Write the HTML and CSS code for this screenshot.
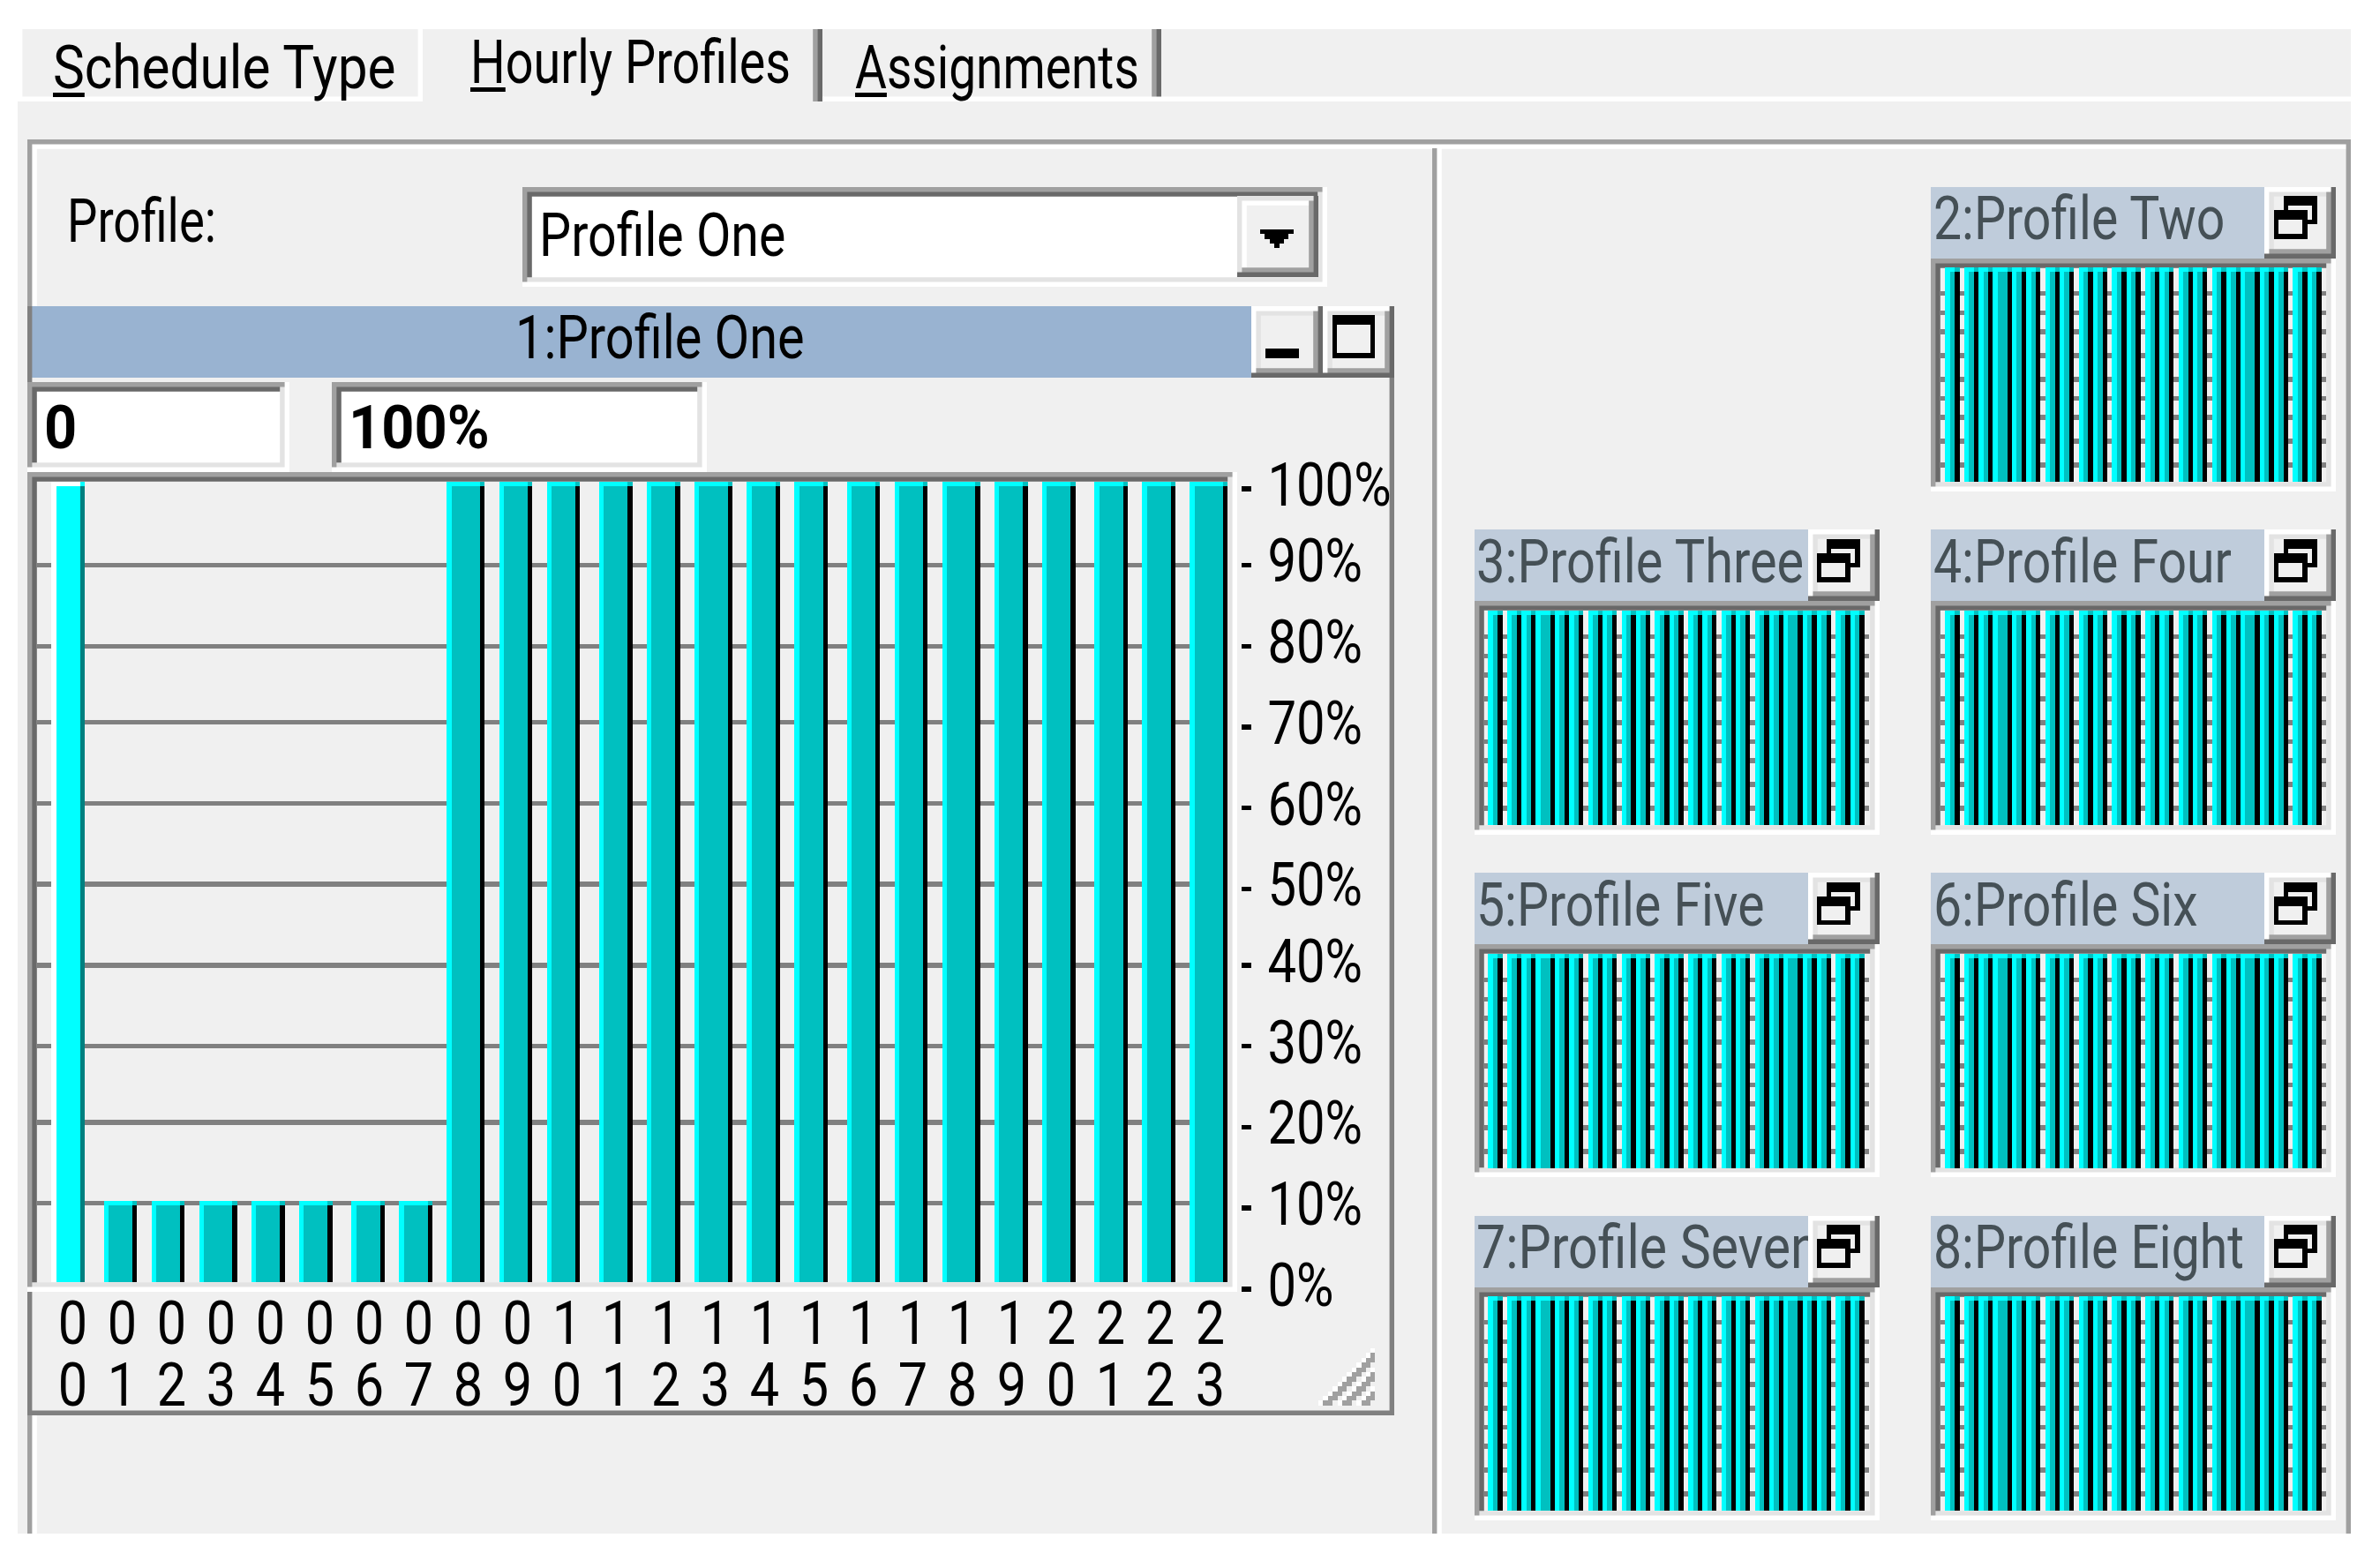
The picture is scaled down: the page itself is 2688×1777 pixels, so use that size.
FILE: index.html
```
<!DOCTYPE html>
<html lang="en">
  <head>
    <meta charset="UTF-8" />
    <meta name="viewport" content="width=device-width, initial-scale=1.0" />
    <title>Hourly Profiles</title>
    <link rel="stylesheet" href="styles.css">
  </head>
  <body>
    <div class="dialog">
      <div class="tabs">
        <div class="tab tab-first"><span class="text"><u>S</u>chedule Type</span></div>
        <div class="tab tab-active"><span class="text"><u>H</u>ourly Profiles</span></div>
        <div class="tab tab-last"><span class="text"><u>A</u>ssignments</span></div>
        <div class="tab-rest"></div>
      </div>

      <div class="frame">
        <div class="left-pane">
          <div class="profile-row">
            <label class="profile-label"><span class="text">Profile:</span></label>
            <div class="combo sunken">
              <span class="text">Profile One</span>
              <div class="combo-button">
                <svg class="arrow" viewBox="0 0 7 4"><path d="M0 0h7v1h-1v1h-1v1h-1v1h-1v-1h-1v-1h-1v-1h-1z" /></svg>
              </div>
            </div>
          </div>

          <div class="window">
            <div class="title-bar">
              <div class="title"><span class="text">1:Profile One</span></div>
              <div class="button"><svg class="icon" viewBox="0 0 9 9"><path d="M1 7h7v2h-7z" /></svg></div>
              <div class="button"><svg class="icon" viewBox="0 0 9 9"><path fill-rule="evenodd" d="M0 0h9v9h-9zM1 2v6h7v-6z" /></svg></div>
            </div>
            <div class="edits">
              <div class="edit edit-hour sunken"><span class="text">0</span></div>
              <div class="edit edit-value sunken"><span class="text">100%</span></div>
            </div>
            <div class="chart-row">
              <div class="chart sunken"><svg id="main-chart" viewBox="0 0 250 168" preserveAspectRatio="none"></svg></div>
              <div class="axis">
                <span>100%</span>
                <span>90%</span>
                <span>80%</span>
                <span>70%</span>
                <span>60%</span>
                <span>50%</span>
                <span>40%</span>
                <span>30%</span>
                <span>20%</span>
                <span>10%</span>
                <span>0%</span>
              </div>
            </div>
            <div class="hours" id="hours"></div>
            <svg class="grip" id="grip" viewBox="0 0 12 12"></svg>
          </div>
        </div>

        <div class="right-pane" id="profiles"></div>
      </div>
    </div>

    <script>
      const SVG = "http://www.w3.org/2000/svg";

      function rect(svg, x, y, w, h, fill) {
        const r = document.createElementNS(SVG, "rect");
        r.setAttribute("x", x);
        r.setAttribute("y", y);
        r.setAttribute("width", w);
        r.setAttribute("height", h);
        r.setAttribute("fill", fill);
        svg.appendChild(r);
      }

      function bar(svg, start, end, top, bottom, colors) {
        rect(svg, start, top, end - start, bottom - top, colors.light);
        rect(svg, start + 1, top + 1, end - start - 2, bottom - top - 1, colors.face);
        rect(svg, end - 1, top, 1, 1, colors.face);
        rect(svg, end - 1, top + 1, 1, bottom - top - 1, colors.dark);
      }

      const normal = { light: "#00ffff", face: "#00c0c0", dark: "#000000" };
      const selected = { light: "#ffffff", face: "#00ffff", dark: "#008080" };

      // main chart, one bar per hour
      const starts = [3, 14, 24, 34, 45, 55, 66, 76, 86, 97, 107, 118, 128, 138, 149, 159, 170, 180, 190, 201, 211, 222, 232, 242];
      const ends = [10, 21, 31, 42, 52, 62, 73, 83, 94, 104, 114, 125, 135, 146, 156, 166, 177, 187, 198, 208, 218, 229, 239, 250];
      const main = document.getElementById("main-chart");
      [17, 34, 50, 67, 84, 101, 118, 134, 151].forEach((y) => rect(main, 0, y, 250, 1, "#808080"));
      starts.forEach((s, i) => {
        const top = i > 0 && i < 8 ? 151 : 0;
        bar(main, s, ends[i], top, 168, i === 0 ? selected : normal);
      });

      const hours = document.getElementById("hours");
      for (let i = 0; i < 24; i++) {
        const [tens, ones] = String(i).padStart(2, "0");
        const hour = document.createElement("div");
        hour.innerHTML = `<span>${tens}</span><span>${ones}</span>`;
        hours.appendChild(hour);
      }

      const grip = document.getElementById("grip");
      for (let x = 0; x < 12; x++) {
        for (let y = 0; y < 12; y++) {
          const d = x + y - 11;
          if (d < 0 || d > 10 || d % 4 === 3) continue;
          rect(grip, x, y, 1, 1, d % 4 === 0 ? "#ffffff" : "#a0a0a0");
        }
      }

      // minimized profiles
      const names = ["2:Profile Two", "3:Profile Three", "4:Profile Four", "5:Profile Five", "6:Profile Six", "7:Profile Seven", "8:Profile Eight"];
      const miniStarts = [1, 5, 8, 11, 15, 18, 22, 25, 29, 32, 36, 39, 43, 46, 50, 53, 57, 60, 63, 67, 70, 74, 77];
      const profiles = document.getElementById("profiles");
      names.forEach((name) => {
        const mini = document.createElement("div");
        mini.className = "mini";
        mini.innerHTML = `
          <div class="title-bar">
            <div class="title"><span class="text">${name}</span></div>
            <div class="button"><svg class="icon" viewBox="0 0 9 9"><path fill-rule="evenodd" d="M2 0h7v6h-2v3h-7v-6h2zM3 2v1h4v2h1v-3zM1 5v3h5v-3z" /></svg></div>
          </div>
          <div class="mini-chart sunken"><svg viewBox="0 0 81 45" preserveAspectRatio="none"></svg></div>`;
        profiles.appendChild(mini);
        const svg = mini.querySelector(".mini-chart svg");
        [5, 9, 13, 18, 23, 27, 31, 36, 41].forEach((y) => rect(svg, 0, y, 81, 1, "#808080"));
        miniStarts.forEach((s) => bar(svg, s, s + (s === 11 || s === 63 ? 4 : 3), 0, 45, normal));
      });
    </script>
  </body>
</html>
```
FILE: styles.css
```
/* 1rem is one pixel of the enlarged dialog */
html {
  font-size: 5.398px;
}

* {
  box-sizing: border-box;
}

body {
  margin: 0;
  background: #fff;
  color: #000;
  font-family: Roboto, "Liberation Sans", sans-serif;
  overflow: hidden;
}

svg {
  display: block;
  shape-rendering: crispEdges;
}

.dialog {
  width: 489.8rem;
  height: 1705px;
  margin: 33px 0 0 20px;
  background: #f0f0f0;
  font-size: 69px;
  line-height: 13rem;
  overflow: hidden;
}

.text {
  display: inline-block;
  white-space: nowrap;
  transform: scaleX(0.83);
  transform-origin: left;
}

u {
  text-decoration: underline;
  text-decoration-thickness: 5px;
  text-underline-offset: 5px;
}

.sunken {
  box-shadow: inset -1rem -1rem #fff, inset 1rem 1rem #a0a0a0,
    inset -2rem -2rem #e3e3e3, inset 2rem 2rem #696969;
}

/* tabs */
.tabs {
  display: flex;
  height: 15.1rem;
}

.tab {
  padding-top: 1.6rem;
}

.tab-first {
  width: 85rem;
  padding-left: 7.5rem;
  box-shadow: inset -1rem -1rem #fff, inset 1rem 0 #fff;
}

.tab-first .text {
  transform: scaleX(0.874);
}

.tab-active {
  width: 84rem;
  padding: 0.6rem 0 0 10rem;
  box-shadow: inset -1rem 0 #696969, inset -2rem 0 #a0a0a0;
}

.tab-active .text {
  transform: scaleX(0.808);
}

.tab-last {
  width: 71rem;
  padding-left: 6.8rem;
  box-shadow: inset 0 -1rem #fff, inset -1rem 0 #696969, inset -2rem 0 #a0a0a0;
}

.tab-last .text {
  transform: scaleX(0.798);
}

.tab-rest {
  flex: 1;
  box-shadow: inset 0 -1rem #fff;
}

/* group frame */
.frame {
  display: flex;
  height: 293rem;
  margin: 8rem 0 0 2rem;
  box-shadow: inset -1rem 0 #a0a0a0, inset 1rem 1rem #a0a0a0, inset 2rem 2rem #fff;
}

.left-pane {
  width: 295rem;
  padding-top: 10rem;
}

.profile-row {
  display: flex;
  height: 21rem;
}

.profile-label {
  width: 104rem;
  padding: 0.8rem 0 0 8.4rem;
}

.profile-label .text {
  transform: scaleX(0.79);
}

.combo {
  display: flex;
  justify-content: space-between;
  width: 169rem;
  padding: 2rem;
  background: #fff;
}

.combo > .text {
  margin: 1.7rem 0 0 1.4rem;
}

.combo-button {
  width: 17rem;
  height: 17rem;
  padding: 6.9rem 0 0 4.9rem;
  background: #f0f0f0;
  box-shadow: inset -1rem -1rem #696969, inset 1rem 1rem #e3e3e3,
    inset -2rem -2rem #a0a0a0, inset 2rem 2rem #fff;
}

.arrow {
  width: 7rem;
  height: 4rem;
}

/* main window */
.window {
  position: relative;
  width: 287rem;
  height: 233rem;
  margin-top: 4rem;
  background: #f0f0f0;
  box-shadow: inset -1rem -1rem #808080, inset 1rem 0 #808080;
}

.title-bar {
  display: flex;
  height: 15rem;
}

.title {
  flex: 1;
  min-width: 0;
  padding-top: 0.3rem;
  background: #99b3d1;
  overflow: hidden;
}

.window .title {
  padding-left: 102.5rem;
  box-shadow: inset 1rem 0 #808080;
}

.window .title .text {
  transform: scaleX(0.836);
}

.button {
  width: 15rem;
  height: 15rem;
  padding: 2rem;
  background: #f0f0f0;
  box-shadow: inset -1rem -1rem #696969, inset 1rem 1rem #fff,
    inset -2rem -2rem #a0a0a0, inset 2rem 2rem #e3e3e3;
}

.icon {
  width: 9rem;
  height: 9rem;
}

.edits {
  display: flex;
  gap: 9rem;
  margin-top: 1rem;
}

.edit {
  height: 19rem;
  padding: 3.1rem 0 0 3.5rem;
  background: #fff;
  font-weight: bold;
}

.edit .text {
  transform: scaleX(0.94);
}

.edit-hour {
  width: 55rem;
}

.edit-value {
  width: 78.7rem;
}

.chart-row {
  display: flex;
  height: 172rem;
}

.chart {
  width: 254rem;
  padding: 2rem;
  background: #f0f0f0;
}

.chart svg {
  width: 250rem;
  height: 168rem;
}

.axis {
  display: grid;
  grid-template-rows: 16rem 17rem 17rem 17rem 17rem 16rem 17rem 17rem 17rem 17rem 17rem;
  margin: -3.8rem 0 0 0.9rem;
}

.axis span {
  white-space: nowrap;
  transform: scaleX(0.84);
  transform-origin: left;
}

.axis span::before {
  content: "";
  display: inline-block;
  width: 2.5rem;
  height: 1rem;
  margin-right: 4rem;
  vertical-align: 3rem;
  background: #000;
}

.hours {
  display: flex;
  padding: 0.2rem 0 0 4.4rem;
}

.hours div {
  display: flex;
  flex-direction: column;
  align-items: center;
  width: 10.38rem;
}

.hours span {
  transform: scaleX(0.86);
}

.grip {
  position: absolute;
  right: 4rem;
  bottom: 2.1rem;
  width: 12rem;
  height: 12rem;
}

/* minimized profiles */
.right-pane {
  display: grid;
  flex: 1;
  grid-template-columns: 85rem 85rem;
  grid-auto-rows: 64rem;
  column-gap: 10.9rem;
  row-gap: 8rem;
  margin-top: 2rem;
  padding: 8rem 0 0 8.8rem;
  box-shadow: inset 1rem 0 #a0a0a0, inset 2rem 0 #fff;
}

.mini:first-child {
  grid-column: 2;
}

.mini .title {
  padding-left: 0.5rem;
  background: #bfccdb;
  color: #455056;
}

.mini .text {
  transform: scaleX(0.828);
}

.mini:nth-child(2) .text {
  transform: scaleX(0.837);
}

/* the last letter runs under the button */
.mini:nth-child(6) .text {
  transform: scaleX(0.855);
}

.mini-chart {
  height: 49rem;
  padding: 2rem;
}

.mini-chart svg {
  width: 81rem;
  height: 45rem;
}
```
